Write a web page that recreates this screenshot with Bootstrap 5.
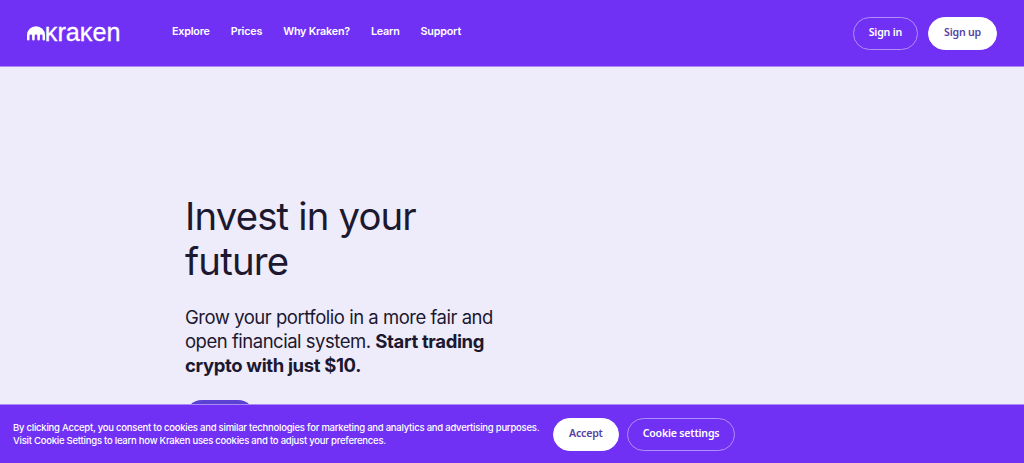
<!doctype html>
<html lang="en">
<head>
  <meta charset="utf-8" />
  <meta name="viewport" content="width=device-width, initial-scale=1" />
  <title>Kraken</title>
  <link href="https://cdn.jsdelivr.net/npm/bootstrap@5.3.3/dist/css/bootstrap.min.css" rel="stylesheet" />
  <style>
    body {
      font-family: Inter, "Liberation Sans", sans-serif;
      background-color: #eeebfa;
      color: #1b1830;
      height: 463px;
      overflow: hidden;
    }
    .purple {
      background-color: #7131f5;
      color: #fff;
    }
    .site-header {
      height: 67px;
      padding: 0 27px 0 26px;
      border-bottom: 1px solid #a98af4;
    }
    .brand-logo {
      display: block;
      width: 96px;
      height: 30px;
      overflow: visible;
    }
    .main-nav {
      margin-left: 50px;
      gap: 21px;
      padding-bottom: 2px;
    }
    .main-nav .nav-link {
      color: #fff;
      font-size: 10.75px;
      font-weight: 600;
      letter-spacing: -.2px;
      line-height: 16px;
      padding: 0;
    }
    .btn-pill {
      height: 33px;
      padding: 0 15px;
      border: 1px solid #b08ff9;
      border-radius: 17px;
      color: #fff;
      font-family: "Noto Sans", "Open Sans", sans-serif;
      font-size: 10.6px;
      font-weight: 600;
      letter-spacing: -.2px;
      line-height: 29px;
      white-space: nowrap;
    }
    .btn-pill.solid {
      background-color: #fff;
      border-color: #fff;
      color: #5741a5;
    }
    .header-actions {
      gap: 10px;
    }
    .hero {
      padding: 127px 0 0 185px;
    }
    .hero h1 {
      width: 260px;
      margin: 0 0 22px;
      font-size: 38.3px;
      font-weight: 400;
      letter-spacing: -.82px;
      line-height: 44.5px;
    }
    .hero p {
      margin: 0 0 23px;
      font-size: 18.5px;
      letter-spacing: -.48px;
      line-height: 24px;
      white-space: nowrap;
    }
    .hero strong {
      font-weight: 700;
      letter-spacing: -.36px;
    }
    .hero-btn {
      width: 70px;
      height: 34px;
      border-radius: 17px;
      background-color: #5b42d2;
    }
    .cookie-bar {
      height: 59px;
      padding: 0 13px;
      border-top: 1px solid #a98af4;
    }
    .cookie-bar p {
      width: 540px;
      font-size: 9.5px;
      font-weight: 500;
      letter-spacing: -.235px;
      line-height: 13px;
      white-space: nowrap;
    }
    .cookie-bar .btn-pill {
      padding-bottom: 2px;
      line-height: 27px;
    }
  </style>
</head>
<body>

  <header class="site-header purple d-flex align-items-center">
    <a href="#" aria-label="Kraken">
      <svg class="brand-logo" viewBox="0 -5 96 30" fill="#fff">
        <path d="M1 16.2V12.2A9 9 0 0 1 19 12.2V16.2A1.25 1.25 0 0 1 16.5 16.2V12.7A1.3 1.3 0 0 0 13.9 12.7V16.2A1.25 1.25 0 0 1 11.3 16.2V12.7A1.3 1.3 0 0 0 8.7 12.7V16.2A1.25 1.25 0 0 1 6.1 16.2V12.7A1.3 1.3 0 0 0 3.5 12.7V16.2A1.25 1.25 0 0 1 1 16.2Z" />
        <text x="18.8" y="17.6" font-family="Liberation Sans, Arial, sans-serif" font-size="26" stroke="#fff" stroke-width=".3" textLength="75.7" lengthAdjust="spacingAndGlyphs">ĸraĸen</text>
      </svg>
    </a>
    <nav class="nav main-nav flex-nowrap">
      <a class="nav-link" href="#">Explore</a>
      <a class="nav-link" href="#">Prices</a>
      <a class="nav-link" href="#">Why Kraken?</a>
      <a class="nav-link" href="#">Learn</a>
      <a class="nav-link" href="#">Support</a>
    </nav>
    <div class="header-actions d-flex ms-auto">
      <a class="btn btn-pill" href="#">Sign in</a>
      <a class="btn btn-pill solid" href="#">Sign up</a>
    </div>
  </header>

  <main class="hero">
    <h1>Invest in your<br>future</h1>
    <p>Grow your portfolio in a more fair and<br>open financial system. <strong>Start trading<br>crypto with just $10.</strong></p>
    <div class="hero-btn"></div>
  </main>

  <div class="cookie-bar purple fixed-bottom d-flex align-items-center">
    <p class="mb-0">By clicking Accept, you consent to cookies and similar technologies for marketing and analytics and advertising purposes.<br>Visit Cookie Settings to learn how Kraken uses cookies and to adjust your preferences.</p>
    <div class="d-flex gap-2">
      <button class="btn btn-pill solid">Accept</button>
      <button class="btn btn-pill">Cookie settings</button>
    </div>
  </div>

  <script src="https://cdn.jsdelivr.net/npm/bootstrap@5.3.3/dist/js/bootstrap.bundle.min.js"></script>
</body>
</html>
